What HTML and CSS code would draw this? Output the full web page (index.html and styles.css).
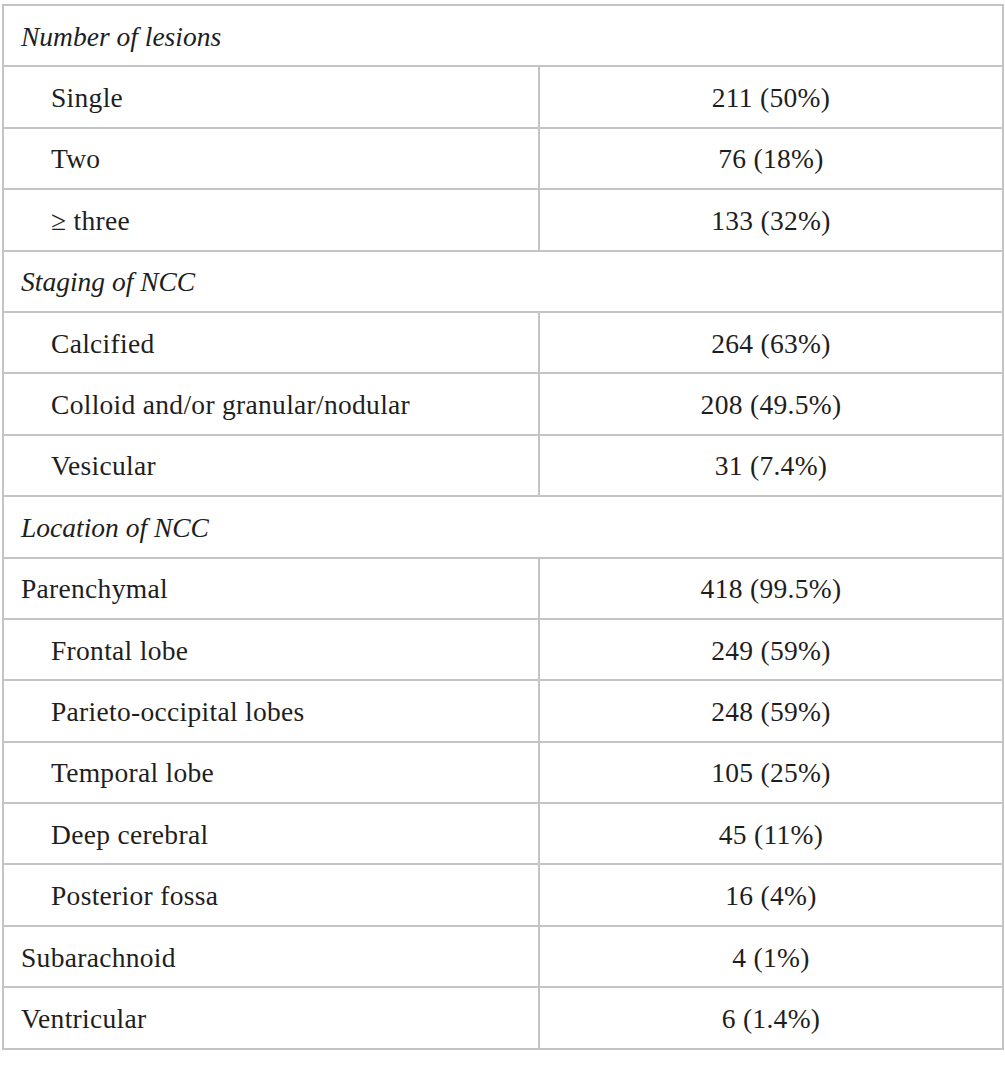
FILE: index.html
```html
<!DOCTYPE html>
<html>
<head>
<meta charset="utf-8">
<link rel="stylesheet" href="styles.css">
</head>
<body>
<table class="tbl">
  <colgroup><col class="c1"><col class="c2"></colgroup>
  <tr><td class="head" colspan="2">Number of lesions</td></tr>
  <tr><td class="lab ind">Single</td><td class="val">211 (50%)</td></tr>
  <tr><td class="lab ind">Two</td><td class="val">76 (18%)</td></tr>
  <tr><td class="lab ind">≥ three</td><td class="val">133 (32%)</td></tr>
  <tr><td class="head" colspan="2">Staging of NCC</td></tr>
  <tr><td class="lab ind">Calcified</td><td class="val">264 (63%)</td></tr>
  <tr><td class="lab ind">Colloid and/or granular/nodular</td><td class="val">208 (49.5%)</td></tr>
  <tr><td class="lab ind">Vesicular</td><td class="val">31 (7.4%)</td></tr>
  <tr><td class="head" colspan="2">Location of NCC</td></tr>
  <tr><td class="lab">Parenchymal</td><td class="val">418 (99.5%)</td></tr>
  <tr><td class="lab ind">Frontal lobe</td><td class="val">249 (59%)</td></tr>
  <tr><td class="lab ind">Parieto-occipital lobes</td><td class="val">248 (59%)</td></tr>
  <tr><td class="lab ind">Temporal lobe</td><td class="val">105 (25%)</td></tr>
  <tr><td class="lab ind">Deep cerebral</td><td class="val">45 (11%)</td></tr>
  <tr><td class="lab ind">Posterior fossa</td><td class="val">16 (4%)</td></tr>
  <tr><td class="lab">Subarachnoid</td><td class="val">4 (1%)</td></tr>
  <tr><td class="lab">Ventricular</td><td class="val">6 (1.4%)</td></tr>
</table>
</body>
</html>
```
FILE: styles.css
```css
html, body {
  margin: 0;
  padding: 0;
  background: #fff;
}
body {
  padding: 4px 0 0 2px;
  font-family: "Liberation Serif", "Times New Roman", serif;
  font-size: 27.5px;
  color: #1e1e1e;
}
.tbl {
  border-collapse: collapse;
  width: 1002px;
  table-layout: fixed;
}
.c1 {
  width: 536px;
}
.tbl td {
  border: 2px solid #c4c4c4;
  height: 57.4px;
  padding: 2px 0 0 0;
  vertical-align: middle;
  white-space: nowrap;
  letter-spacing: 0.3px;
}
.tbl td.lab {
  padding-left: 17px;
}
.tbl td.ind {
  padding-left: 47px;
}
.tbl td.head {
  padding-left: 17px;
  font-style: italic;
  letter-spacing: 0;
}
.tbl td.val {
  text-align: center;
}
```
